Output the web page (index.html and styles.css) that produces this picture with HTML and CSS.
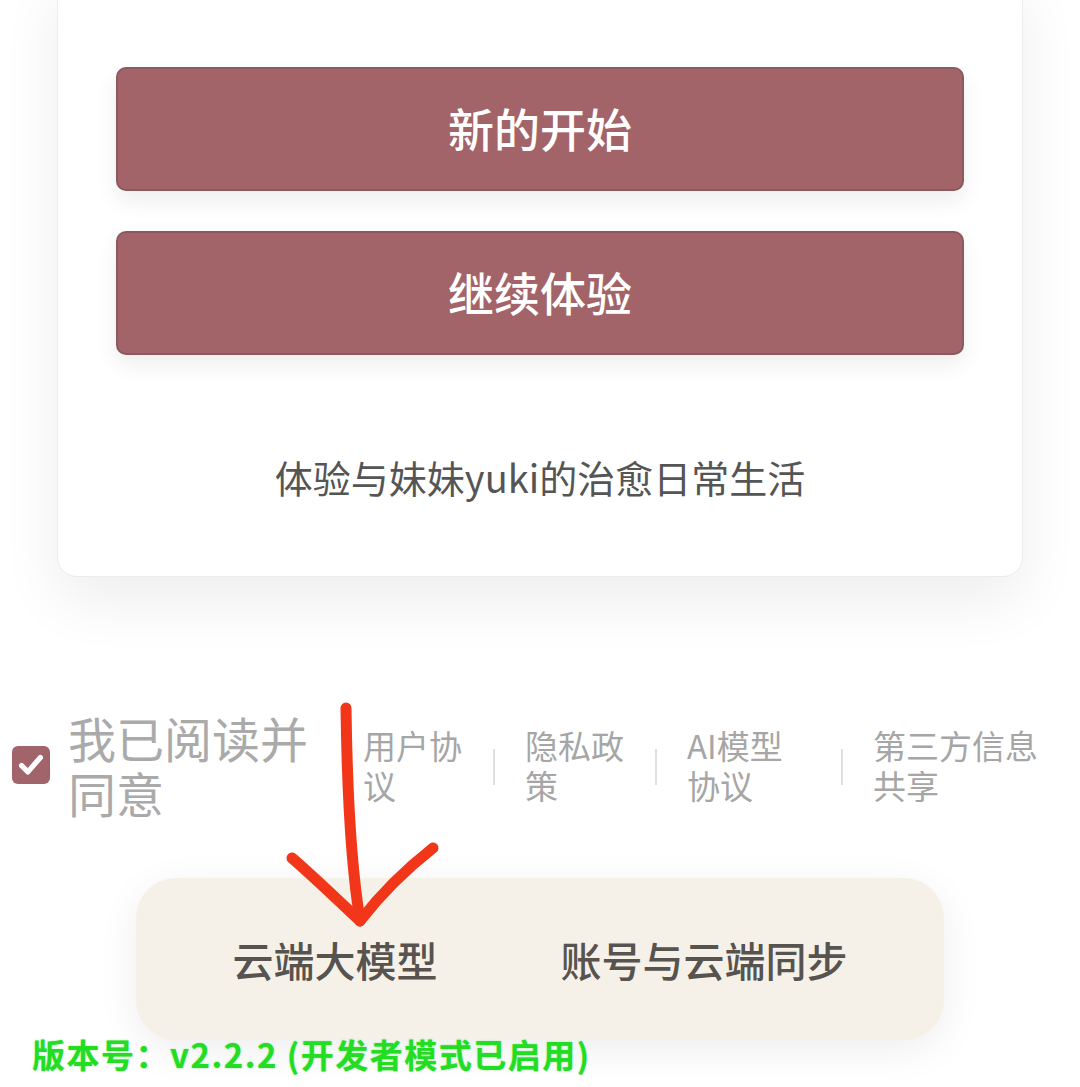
FILE: index.html
```html
<!DOCTYPE html>
<html lang="zh-CN">
<head>
    <meta charset="UTF-8">
    <meta name="viewport" content="width=device-width, initial-scale=1.0">
    <title>Yuki</title>
    <link rel="stylesheet" href="styles.css">
</head>

<body>
    <div class="screen">
        <div class="card">
            <button class="main-btn">新的开始</button>
            <button class="main-btn">继续体验</button>
            <p class="tagline">体验与妹妹yuki的治愈日常生活</p>
        </div>

        <div class="agree-row">
            <span class="check">
                <svg viewBox="0 0 24 24" width="30" height="30">
                    <path d="M4.5 12.5 L9.5 17.5 L19.5 6" fill="none" stroke="#fff" stroke-width="4.2" stroke-linecap="round" stroke-linejoin="round"/>
                </svg>
            </span>
            <span class="agree-text">我已阅读并同意</span>
            <div class="links">
                <a href="#" class="link">用户协议</a>
                <span class="sep"></span>
                <a href="#" class="link">隐私政策</a>
                <span class="sep"></span>
                <a href="#" class="link link-ai">AI模型协议</a>
                <span class="sep"></span>
                <a href="#" class="link link-long">第三方信息共享</a>
            </div>
        </div>

        <div class="cloud-bar">
            <span class="cloud-item">云端大模型</span>
            <span class="cloud-item">账号与云端同步</span>
        </div>

        <div class="version">版本号：v2.2.2 (开发者模式已启用)</div>

        <!-- hand drawn annotation on top of the screenshot -->
        <svg class="annotation" viewBox="0 0 1080 1087" width="1080" height="1087">
            <g fill="none" stroke="#f2361a" stroke-width="11" stroke-linecap="round" stroke-linejoin="round">
                <path d="M346 708 C 347 780, 350 860, 360 920"/>
                <path d="M292 858 C 315 878, 338 900, 360 921"/>
                <path d="M433 848 C 405 870, 380 895, 360 921"/>
            </g>
        </svg>
    </div>
</body>
</html>
```

FILE: styles.css
```css
body {
    margin: 0;
    padding: 0;
    background-color: #fff;
    font-family: "Noto Sans CJK SC", "Noto Sans", sans-serif;
    overflow: hidden;
}

.screen {
    position: relative;
    width: 1080px;
    height: 1087px;
    overflow: hidden;
}

.card {
    box-sizing: border-box;
    margin: -30px 57px 0;
    padding: 96px 58px 75px;
    background-color: #fff;
    border: 1px solid #ececec;
    border-radius: 20px;
    box-shadow: 0 24px 60px rgba(0, 0, 0, 0.07);
}

.main-btn {
    display: block;
    box-sizing: border-box;
    width: 100%;
    height: 124px;
    margin: 0 0 40px;
    padding: 0 0 4px;
    background-color: #a26468;
    border: 2px solid #8a5a5e;
    border-radius: 10px;
    box-shadow: 0 10px 22px rgba(0, 0, 0, 0.07);
    color: #fff;
    font-family: inherit;
    font-size: 46px;
    font-weight: 500;
    cursor: pointer;
}

.tagline {
    margin: 98px 0 0;
    text-align: center;
    font-size: 38px;
    line-height: 48px;
    color: #555;
}

.agree-row {
    display: flex;
    align-items: center;
    margin-top: 133px;
    padding-left: 12px;
}

.check {
    display: flex;
    align-items: center;
    justify-content: center;
    width: 38px;
    height: 38px;
    margin-right: 18px;
    background-color: #a0646a;
    border-radius: 6px;
    flex-shrink: 0;
}

.agree-text {
    width: 240px;
    margin-right: 55px;
    font-size: 48px;
    line-height: 55px;
    color: #aaa;
}

.links {
    display: flex;
    align-items: center;
    gap: 30px;
}

.link {
    width: 100px;
    font-size: 33px;
    line-height: 40px;
    color: #a6a6a6;
    text-decoration: none;
}

.link-ai {
    width: 124px;
}

.link-long {
    width: 168px;
}

.sep {
    width: 2px;
    height: 36px;
    margin-top: 4px;
    background-color: #e0e0e0;
}

.cloud-bar {
    display: flex;
    align-items: center;
    justify-content: center;
    gap: 123px;
    width: 808px;
    height: 162px;
    margin: 58px auto 0;
    background-color: #f5f1e8;
    border-radius: 40px;
    box-shadow: 0 10px 40px rgba(0, 0, 0, 0.07);
}

.cloud-item {
    font-size: 41px;
    font-weight: 500;
    color: #57534e;
}

.version {
    position: absolute;
    left: 32px;
    top: 1033px;
    font-size: 33px;
    font-weight: 700;
    letter-spacing: 1.5px;
    line-height: 42px;
    color: #22dd22;
    text-shadow: 0 0 2px rgba(34, 221, 34, 0.45);
}

.annotation {
    position: absolute;
    left: 0;
    top: 0;
    pointer-events: none;
}
```
